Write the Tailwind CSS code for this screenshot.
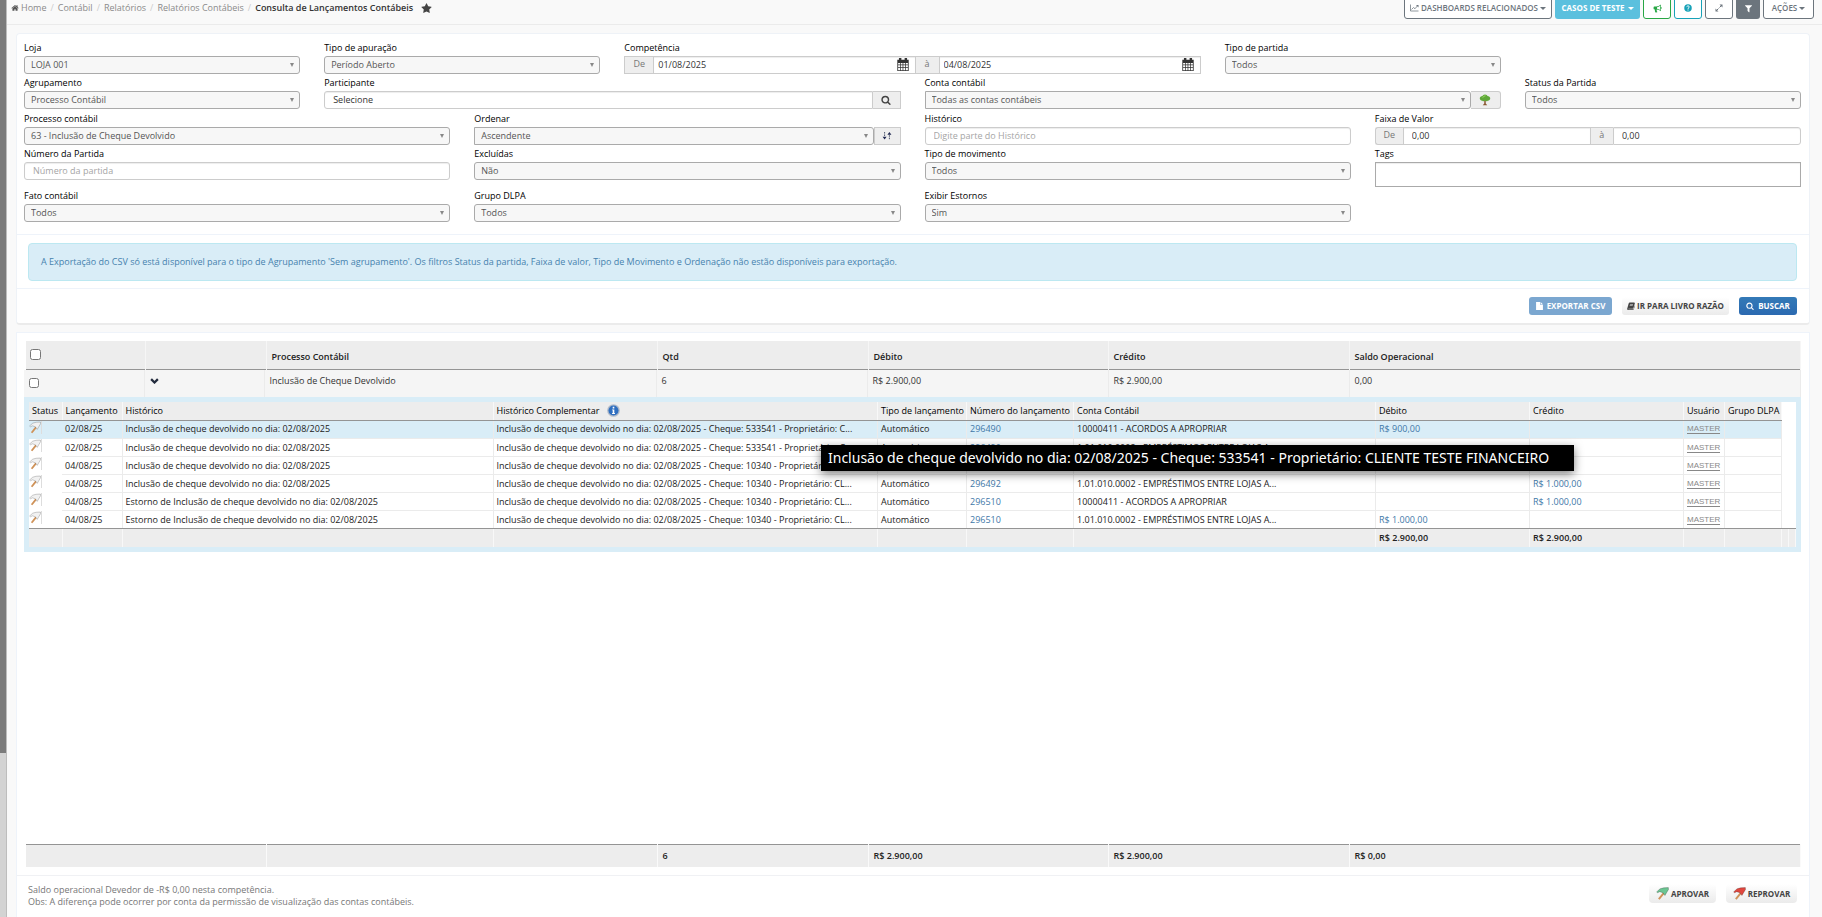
<!DOCTYPE html>
<html lang="pt-BR">
<head>
  <meta charset="UTF-8" />
  <title>Consulta de Lançamentos Contábeis</title>
  <meta name="viewport" content="width=device-width, initial-scale=1.0" />
  <script src="https://cdn.jsdelivr.net/npm/@tailwindcss/browser@4"></script>
</head>
<body class="flex min-h-screen overflow-hidden bg-[#f9f9f9] font-['Open_Sans','Noto_Sans',sans-serif] text-[9px] leading-3 text-[#333]">

  <!-- === ICONS === -->
  <svg class="hidden" aria-hidden="true">
    <symbol id="i-home" viewBox="0 0 1792 1792"><path fill="currentColor" d="M1472 992v480q0 26-19 45t-45 19h-384v-384h-256v384h-384q-26 0-45-19t-19-45v-480q0-1 .5-3t.5-3l575-474 575 474q1 2 1 6zm223-69l-62 74q-8 9-21 11h-3q-13 0-21-7l-692-577-692 577q-12 8-24 7-13-2-21-11l-62-74q-8-10-7-23.500t11-21.500l719-599q32-26 76-26t76 26l244 204v-195q0-14 9-23t23-9h192q14 0 23 9t9 23v408l219 182q10 8 11 21.500t-7 23.500z"/></symbol>
    <symbol id="i-star" viewBox="0 0 1792 1792"><path fill="currentColor" d="M1728 647q0 22-26 48l-363 354 86 500q1 7 1 20 0 21-10.500 35.500t-30.500 14.500q-19 0-40-12l-449-236-449 236q-22 12-40 12-21 0-31.500-14.500t-10.500-35.500q0-6 2-20l86-500-364-354q-25-27-25-48 0-37 56-46l502-73 225-455q19-41 49-41t49 41l225 455 502 73q56 9 56 46z"/></symbol>
    <symbol id="i-filter" viewBox="0 0 1792 1792"><path fill="currentColor" d="M1595 295q17 41-14 70l-493 493v742q0 42-39 59-13 5-25 5-27 0-45-19l-256-256q-19-19-19-45v-486l-493-493q-31-29-14-70 17-39 59-39h1280q42 0 59 39z"/></symbol>
    <symbol id="i-search" viewBox="0 0 1792 1792"><path fill="currentColor" d="M1216 832q0-185-131.500-316.500t-316.500-131.500-316.500 131.500-131.500 316.500 131.500 316.500 316.500 131.500 316.500-131.500 131.500-316.500zm512 832q0 52-38 90t-90 38q-54 0-90-38l-343-342q-179 124-399 124-143 0-273.500-55.500t-225-150-150-225-55.500-273.500 55.500-273.500 150-225 225-150 273.500-55.500 273.500 55.500 225 150 150 225 55.500 273.500q0 220-124 399l343 343q37 37 37 90z"/></symbol>
    <symbol id="i-chart" viewBox="0 0 18 16"><path fill="none" stroke="currentColor" stroke-width="1.500" d="M1 1v13h16M3 11l4-4 3 2.500 5-6"/><path fill="currentColor" d="M12 2h5v5z"/></symbol>
    <symbol id="i-horn" viewBox="0 0 16 16"><path fill="currentColor" fill-rule="evenodd" d="M14 1v4.500a1.500 1.500 0 0 1 0 3V13c-2.500-2-5-3-7-3.200-1 .5-.8 1.500 0 2.200-.5 1 .2 1.700 1 2.400-.8 1-3 1-4 .2-.4-1.500-1-3-.5-4.900H2.500A1.500 1.500 0 0 1 1 8.200V6a1.500 1.500 0 0 1 1.500-1.500H6C8.500 4.500 11.500 3 14 1zM12.800 3.300C11 4.700 9 5.500 7.200 5.700v2.700c1.800.2 3.800 1 5.600 2.400z"/></symbol>
    <symbol id="i-help" viewBox="0 0 16 16"><circle cx="8" cy="8" r="7.500" fill="currentColor"/><path fill="none" stroke="#fff" stroke-width="2" d="M5.500 6.200C5.700 3 10.600 3.200 10.500 6 10.400 7.600 8 7.600 8 9.800"/><path fill="#fff" d="M7 11h2v2H7z"/></symbol>
    <symbol id="i-expand" viewBox="0 0 16 16"><path stroke="currentColor" stroke-width="2" d="M4 12l3-3M9 7l3-3"/><path fill="currentColor" d="M9 1h6v6zM1 9v6h6z"/></symbol>
    <symbol id="i-calendar" viewBox="0 0 14 16"><path fill="currentColor" fill-rule="evenodd" d="M0 2h2V0h3v2h4V0h3v2h2v14H0zM1 6v2h2.300V6zm3.200 0v2h2.300V6zm3.200 0v2h2.300V6zm3.200 0v2H13V6zM1 9v2.300h2.300V9zm3.200 0v2.300h2.300V9zm3.200 0v2.300h2.300V9zm3.200 0v2.300H13V9zM1 12.300V15h2.300v-2.700zm3.200 0V15h2.300v-2.700zm3.200 0V15h2.300v-2.700zm3.200 0V15H13v-2.700z"/></symbol>
    <symbol id="i-sort" viewBox="0 0 12 10"><path fill="none" stroke="#2b3350" stroke-width="1" stroke-dasharray="2 1" d="M3 0v6M9 4v6"/><path fill="#1d2650" d="M.5 6h5L3 9.500zM6.500 3.500h5L9 0z"/></symbol>
    <symbol id="i-tree" viewBox="0 0 16 16"><path fill="#8a5a33" d="M7 8h2v4.500l2 2.500H5l2-2.500z"/><path fill="#5fa83a" d="M8 .5c2 0 3 1 3.300 2 2 0 3.700 1.300 3.700 3.200C15 8 13 9.300 11.500 9c-1 1-2 .8-3.500 0-1.500.8-2.500 1-3.500 0C3 9.300 1 8 1 5.700c0-1.900 1.700-3.200 3.700-3.200C5 1.500 6 .5 8 .5z"/><path fill="#8ccc5a" d="M5 3.500c1-1.500 3-2 4.500-1.200C8 3 7 4.500 4 5.500z"/></symbol>
    <symbol id="i-file" viewBox="0 0 12 14"><path fill="currentColor" d="M0 0h7v5h5v9H0zM8 0l4 4H8z"/></symbol>
    <symbol id="i-book" viewBox="0 0 16 16"><path fill="currentColor" fill-rule="evenodd" d="M5.500 1H14c1.500 0 2 1 1.600 2.200L13 12c-.3.800-1 1.300-1.900 1.300H3.300c-.8 0-1 .8-.2 1.200h9.200c.6 0 .9-.3 1.100-.8l2-6.700c.7.500.6 1 .4 1.700L13.600 14.500c-.3.900-1 1.500-2 1.500H3C1 16 0 14.500.5 13L3.300 3C3.700 1.800 4.300 1 5.500 1zM6.300 4l-.3 1h6l.3-1zM5.600 6.500l-.3 1h6l.3-1z"/></symbol>
    <symbol id="i-chevron" viewBox="0 0 12 8"><path fill="none" stroke="currentColor" stroke-width="3" d="M1.500 1.500L6 6l4.500-4.500"/></symbol>
    <symbol id="i-info" viewBox="0 0 16 16"><circle cx="8" cy="8" r="7.800" fill="#b3bcca"/><circle cx="8" cy="8" r="6.200" fill="#2f6fc0"/><path fill="#fff" d="M7 3.500h2v2H7zM6.300 6.700H9v4.500h.8v1H6.200v-1H7V7.700h-.7z"/></symbol>
    <symbol id="i-flag" viewBox="0 0 16 16"><path stroke="#cf9258" stroke-width="2.400" d="M9.500 7.500L3.500 15"/><path fill="currentColor" stroke="#0005" stroke-width=".8" stroke-linejoin="round" d="M.8 6L5 2.200 9.500 1l5.700-.3.200 2.300L13 7l-2 3.500L8.500 7 4.500 5.800 2 7z"/></symbol>
  </svg>

  <!-- === SIDEBAR SCROLLBAR === -->
  <div class="flex w-[7px] shrink-0 border-r border-[#bdbdbd] bg-[#d3d3d3]">
    <div class="h-[753px] w-full bg-[#7b7b7b]"></div>
  </div>

  <div class="flex min-w-0 flex-1 flex-col">

    <!-- === TOP BAR === -->
    <header class="flex h-[25px] shrink-0 justify-between border-b border-[#ebebeb] pr-2 pl-1">
      <nav class="flex h-4 items-center gap-1 text-[#8a8a8a]" aria-label="breadcrumb">
        <a href="#" class="flex items-center gap-[2px]"><svg class="size-2 text-[#555]"><use href="#i-home"/></svg>Home</a>
        <span class="text-[#ccc]">/</span><a href="#">Contábil</a>
        <span class="text-[#ccc]">/</span><a href="#">Relatórios</a>
        <span class="text-[#ccc]">/</span><a href="#">Relatórios Contábeis</a>
        <span class="text-[#ccc]">/</span><span class="font-semibold text-[#333]">Consulta de Lançamentos Contábeis</span>
        <button class="ml-1" aria-label="Favoritar"><svg class="size-[11px] text-[#444]"><use href="#i-star"/></svg></button>
      </nav>
      <div class="-mt-[3px] flex h-[22px] gap-[3px] text-[8px] font-semibold text-[#6c757d]">
        <button class="flex w-[148px] items-center justify-center gap-[2px] rounded-[3px] border border-[#6c757d] bg-white"><svg class="h-2 w-[9px]"><use href="#i-chart"/></svg>DASHBOARDS RELACIONADOS<span class="border-x-[3px] border-t-[3px] border-x-transparent"></span></button>
        <button class="flex w-[85px] items-center justify-center gap-[3px] rounded-[3px] bg-[#5bc0de] font-bold text-white">CASOS DE TESTE<span class="border-x-[3px] border-t-[3px] border-x-transparent"></span></button>
        <button class="flex w-7 items-center justify-center rounded-[3px] border border-[#28a745] bg-white text-[#28a745]" aria-label="Novidades"><svg class="size-[9px]"><use href="#i-horn"/></svg></button>
        <button class="flex w-7 items-center justify-center rounded-[3px] border border-[#17a2b8] bg-white text-[#17a2b8]" aria-label="Ajuda"><svg class="size-2"><use href="#i-help"/></svg></button>
        <button class="flex w-7 items-center justify-center rounded-[3px] border border-[#6c757d] bg-white" aria-label="Expandir"><svg class="size-2"><use href="#i-expand"/></svg></button>
        <button class="flex w-6 items-center justify-center rounded-[3px] bg-[#6c757d] text-white" aria-label="Filtros"><svg class="size-[9px]"><use href="#i-filter"/></svg></button>
        <button class="flex w-[51px] items-center justify-center gap-[2px] rounded-[3px] border border-[#6c757d] bg-white">AÇÕES<span class="border-x-[3px] border-t-[3px] border-x-transparent"></span></button>
      </div>
    </header>

    <!-- === FILTERS === -->
    <section class="mt-2 mr-3 ml-[9px] rounded border border-b-2 border-[#eef2f7] border-b-[#ebebeb] bg-white">
      <form id="filters" class="grid grid-cols-12 gap-x-6 pt-[6px] pr-2 pb-[11px] pl-[7px]"></form>
      <div class="border-y border-[#eef3fa] pt-2 pr-3 pb-[7px] pl-[11px]">
        <div class="rounded border border-[#bce8f1] bg-[#d9edf7] px-3 py-3 text-[#4682ae]">A Exportação do CSV só está disponível para o tipo de Agrupamento 'Sem agrupamento'. Os filtros Status da partida, Faixa de valor, Tipo de Movimento e Ordenação não estão disponíveis para exportação.</div>
      </div>
      <div class="flex justify-end gap-[10px] px-3 py-2 text-[8px] font-bold">
        <button class="flex h-[18px] w-[83px] items-center justify-center gap-1 rounded-[3px] bg-[#7ba7d0] text-white"><svg class="h-2 w-[7px]"><use href="#i-file"/></svg>EXPORTAR CSV</button>
        <button class="flex h-[18px] w-[107px] items-center justify-center gap-[2px] rounded-[3px] bg-linear-to-b from-white to-[#ebebeb] text-[#444]"><svg class="size-2"><use href="#i-book"/></svg>IR PARA LIVRO RAZÃO</button>
        <button class="flex h-[18px] w-[58px] items-center justify-center gap-1 rounded-[3px] bg-linear-to-b from-[#337ab7] to-[#2b69b0] text-white"><svg class="size-2"><use href="#i-search"/></svg>BUSCAR</button>
      </div>
    </section>

    <!-- === RESULTS === -->
    <section class="mt-[7px] mr-3 ml-[9px] flex flex-1 flex-col border-x border-t border-[#eef3fa] bg-white">
      <div class="pt-2 pr-2 pl-[7px]">
        <div class="pl-[2px]">
          <table class="w-full table-fixed text-left">
            <colgroup><col class="w-[119px]"><col class="w-[121px]"><col class="w-[391px]"><col class="w-[211px]"><col class="w-[240px]"><col class="w-[241px]"><col></colgroup>
            <thead>
              <tr class="h-7 border-b border-[#949494] bg-[#ededed] text-[#222] [&>th]:border-r [&>th]:border-[#f6f6f6] [&>th]:px-[5px] [&>th]:pt-1 [&>th]:font-semibold">
                <th><input type="checkbox" class="mb-1 ml-[-1px] block size-[11px]" aria-label="Selecionar todos"></th><th></th>
                <th>Processo Contábil</th><th>Qtd</th><th>Débito</th><th>Crédito</th><th>Saldo Operacional</th>
              </tr>
            </thead>
          </table>
        </div>

        <div class="h-[474px]">
          <table class="w-full table-fixed text-left">
            <colgroup><col class="w-[120px]"><col class="w-[120px]"><col class="w-[392px]"><col class="w-[211px]"><col class="w-[241px]"><col class="w-[241px]"><col></colgroup>
            <tbody>
              <tr class="h-[27px] bg-[#f5f5f5] [&>td]:border-r [&>td]:border-[#ebebeb] [&>td]:px-[5px] [&>td]:pb-1">
                <td><input type="checkbox" class="mt-1 block size-[10px]" aria-label="Selecionar linha"></td>
                <td><button class="block" aria-label="Recolher"><svg class="h-[6px] w-[9px] text-[#222b3c]"><use href="#i-chevron"/></svg></button></td>
                <td>Inclusão de Cheque Devolvido</td><td>6</td><td>R$ 2.900,00</td><td>R$ 2.900,00</td><td>0,00</td>
              </tr>
            </tbody>
          </table>
          <div class="relative bg-[#d9edf7] p-[5px]">
            <table class="w-full table-fixed bg-white text-left whitespace-nowrap">
              <colgroup><col class="w-[33px]"><col class="w-[60px]"><col class="w-[371px]"><col><col class="w-[89px]"><col class="w-[107px]"><col class="w-[302px]"><col class="w-[154px]"><col class="w-[154px]"><col class="w-[41px]"><col class="w-[57px]"><col class="w-[7px]"><col class="w-[7px]"></colgroup>
              <thead>
                <tr class="h-[19px] text-black [&>th]:border-r [&>th]:border-b [&>th]:border-r-[#f8f8f8] [&>th]:border-b-[#949494] [&>th]:bg-[#ededed] [&>th]:pl-[3px] [&>th]:font-medium">
                  <th>Status</th><th>Lançamento</th><th>Histórico</th>
                  <th><span class="flex items-center gap-2">Histórico Complementar <svg class="size-[13px]"><use href="#i-info"/></svg></span></th>
                  <th>Tipo de lançamento</th><th>Número do lançamento</th><th>Conta Contábil</th><th>Débito</th><th>Crédito</th><th>Usuário</th><th>Grupo DLPA</th>
                </tr>
              </thead>
              <tbody id="entries"></tbody>
              <tfoot>
                <tr class="h-[18px] bg-[#ededed] font-semibold text-[#222] [&>td]:border-t [&>td]:border-r [&>td]:border-t-[#949494] [&>td]:border-r-[#f8f8f8] [&>td]:pl-[3px]">
                  <td></td><td></td><td></td><td></td><td></td><td></td><td></td><td>R$ 2.900,00</td><td>R$ 2.900,00</td><td></td><td></td><td></td><td></td>
                </tr>
              </tfoot>
            </table>
            <div role="tooltip" class="absolute top-12 left-[797px] flex h-[26px] min-w-[753px] items-center bg-black px-[7px] font-['Noto_Sans',sans-serif] text-[14px] leading-5 whitespace-nowrap text-white shadow-[0_3px_10px_rgba(0,0,0,0.5)]">Inclusão de cheque devolvido no dia: 02/08/2025 - Cheque: 533541 - Proprietário: CLIENTE TESTE FINANCEIRO</div>
          </div>
        </div>

        <div class="pl-[2px]">
          <table class="w-full table-fixed text-left">
            <colgroup><col class="w-[240px]"><col class="w-[391px]"><col class="w-[211px]"><col class="w-[240px]"><col class="w-[241px]"><col></colgroup>
            <tfoot>
              <tr class="h-[23px] border-t border-[#949494] bg-[#ededed] font-semibold text-[#222] [&>td]:border-r [&>td]:border-r-[#fafafa] [&>td]:px-[5px]">
                <td></td><td></td><td>6</td><td>R$ 2.900,00</td><td>R$ 2.900,00</td><td>R$ 0,00</td>
              </tr>
            </tfoot>
          </table>
        </div>
      </div>

      <div class="mt-2 flex justify-between border-t border-[#f0f1f4] pt-2 pr-3 pl-[11px]">
        <p class="text-[#777]">Saldo operacional Devedor de -R$ 0,00 nesta competência.<br>Obs: A diferença pode ocorrer por conta da permissão de visualização das contas contábeis.</p>
        <div class="flex gap-[10px] text-[8px] font-bold text-[#444]">
          <button class="flex h-[19px] w-[67px] items-center justify-center gap-[2px] rounded bg-linear-to-b from-white to-[#ebebeb]"><svg class="size-[13px] text-[#6cc592]"><use href="#i-flag"/></svg>APROVAR</button>
          <button class="flex h-[19px] w-[71px] items-center justify-center gap-[2px] rounded bg-linear-to-b from-white to-[#ebebeb]"><svg class="size-[13px] text-[#e0473f]"><use href="#i-flag"/></svg>REPROVAR</button>
        </div>
      </div>
    </section>
  </div>

  <!-- === FILTER FIELDS === -->
  <script>
    const select = (id, value, shape = 'rounded-[3px]') => `
      <div class="relative min-w-0 flex-1">
        <select id="${id}" class="block h-[18px] w-full appearance-none border border-[#aaa] bg-[#f7f7f7] pl-[6px] text-[#555] ${shape}"><option>${value}</option></select>
        <span class="pointer-events-none absolute top-[7px] right-[6px] border-x-[2px] border-t-[4px] border-x-transparent border-t-[#888]"></span>
      </div>`;
    const input = (id, value, hint = '', shape = 'rounded-[3px] px-2') =>
      `<input id="${id}" value="${value}" placeholder="${hint}" class="block h-[18px] w-full min-w-0 flex-1 border border-[#ccc] bg-white pb-[2px] text-[#333] shadow-[inset_0_1px_1px_rgba(0,0,0,0.075)] placeholder:text-[#a5a5a5] ${shape}">`;
    const date = (id, value) => `
      <div class="relative min-w-0 flex-1">${input(id, value, '', 'pl-1')}
        <svg class="absolute top-[2px] right-[7px] h-[13px] w-3 text-[#333]"><use href="#i-calendar"/></svg>
      </div>`;
    const addon = (text, cls) => `<span class="flex h-[18px] items-center justify-center border-y border-[#ccc] bg-[#eee] pb-[2px] text-[#777] ${cls}">${text}</span>`;
    const iconButton = (icon, label, size, cls) => `<button type="button" aria-label="${label}" class="flex h-[18px] items-center justify-center border border-[#ccc] bg-[#eee] text-[#444] ${cls}"><svg class="${size}"><use href="#${icon}"/></svg></button>`;

    const fields = [
      ['loja', 'Loja', 'col-span-2', select('loja', 'LOJA 001')],
      ['apuracao', 'Tipo de apuração', 'col-span-2', select('apuracao', 'Período Aberto')],
      ['competencia', 'Competência', 'col-span-4', addon('De', 'w-[29px] border-l') + date('competencia', '01/08/2025') + addon('à', 'w-[23px]') + date('competenciaFim', '04/08/2025')],
      ['partida', 'Tipo de partida', 'col-span-2', select('partida', 'Todos')],
      ['agrupamento', 'Agrupamento', 'col-span-2 col-start-1 mb-[1px]', select('agrupamento', 'Processo Contábil')],
      ['participante', 'Participante', 'col-span-4', input('participante', 'Selecione', '', 'rounded-l-[3px] px-2') + iconButton('i-search', 'Buscar participante', 'size-[10px]', 'w-7 border-l-0')],
      ['conta', 'Conta contábil', 'col-span-4', select('conta', 'Todas as contas contábeis', 'rounded-r-[3px]') + iconButton('i-tree', 'Plano de contas', 'size-3', 'w-[30px] rounded-r-[3px] border-l-0')],
      ['status', 'Status da Partida', 'col-span-2', select('status', 'Todos')],
      ['processo', 'Processo contábil', 'col-span-3', select('processo', '63 - Inclusão de Cheque Devolvido')],
      ['ordenar', 'Ordenar', 'col-span-3', select('ordenar', 'Ascendente', 'rounded-r-[3px]') + iconButton('i-sort', 'Inverter ordem', 'h-2 w-[10px]', 'w-[27px]')],
      ['historico', 'Histórico', 'col-span-3', input('historico', '', 'Digite parte do Histórico')],
      ['valor', 'Faixa de Valor', 'col-span-3', addon('De', 'w-7 rounded-l-[3px] border-l') + input('valor', '0,00', '', 'px-2') + addon('à', 'w-[22px]') + input('valorFim', '0,00', '', 'rounded-r-[3px] px-2')],
      ['numero', 'Número da Partida', 'col-span-3', input('numero', '', 'Número da partida')],
      ['excluidas', 'Excluídas', 'col-span-3', select('excluidas', 'Não')],
      ['movimento', 'Tipo de movimento', 'col-span-3', select('movimento', 'Todos')],
      ['tags', 'Tags', 'col-span-3', `<textarea id="tags" class="block h-[25px] w-full resize-none border border-[#aaa] bg-white shadow-[inset_0_1px_1px_rgba(0,0,0,0.075)]"></textarea>`],
      ['fato', 'Fato contábil', 'col-span-3', select('fato', 'Todos')],
      ['dlpa', 'Grupo DLPA', 'col-span-3', select('dlpa', 'Todos')],
      ['estornos', 'Exibir Estornos', 'col-span-3', select('estornos', 'Sim')],
    ];
    document.getElementById('filters').innerHTML = fields.map(([id, label, span, control]) => `
      <div class="pb-[1px] ${span}">
        <label for="${id}" class="block h-4 pt-[1px] leading-[14px] font-medium text-black">${label}</label>
        <div class="flex items-start">${control}</div>
      </div>`).join('');
  </script>

  <!-- === ENTRY ROWS === -->
  <script>
    const inc = 'Inclusão de cheque devolvido no dia: 02/08/2025';
    const est = 'Estorno de Inclusão de cheque devolvido no dia: 02/08/2025';
    const rows = [
      ['02/08/25', inc, '533541 - Proprietário: C...', '296490', '10000411 - ACORDOS A APROPRIAR', 'R$ 900,00', ''],
      ['02/08/25', inc, '533541 - Proprietário: C...', '296490', '1.01.010.0002 - EMPRÉSTIMOS ENTRE LOJAS A...', '', ''],
      ['04/08/25', inc, '10340 - Proprietário: CL...', '296492', '10000411 - ACORDOS A APROPRIAR', 'R$ 1.000,00', ''],
      ['04/08/25', inc, '10340 - Proprietário: CL...', '296492', '1.01.010.0002 - EMPRÉSTIMOS ENTRE LOJAS A...', '', 'R$ 1.000,00'],
      ['04/08/25', est, '10340 - Proprietário: CL...', '296510', '10000411 - ACORDOS A APROPRIAR', '', 'R$ 1.000,00'],
      ['04/08/25', est, '10340 - Proprietário: CL...', '296510', '1.01.010.0002 - EMPRÉSTIMOS ENTRE LOJAS A...', 'R$ 1.000,00', ''],
    ];
    document.getElementById('entries').innerHTML = rows.map(([day, hist, comp, num, conta, deb, cred], i) => {
      const first = i === 0;
      const last = i === rows.length - 1;
      const line = last ? 'border-b border-b-[#949494]' : 'border-b border-b-[#ebebeb]';
      const c = `border-r border-r-[#ebebeb] pl-[3px] ${line} ${first ? 'bg-[#d9edf7] pb-[2px]' : ''}`;
      return `<tr class="h-[18px] text-[#222]">
        <td class="${first ? 'bg-[#d9edf7]' : ''} ${last ? line : ''}"><svg class="mb-1 block size-[13px] border-r border-[#ddd] text-[#f1f1f1]"><use href="#i-flag"/></svg></td>
        <td class="${c}">${day}</td><td class="${c}">${hist}</td>
        <td class="${c}">Inclusão de cheque devolvido no dia: 02/08/2025 - Cheque: ${comp}</td>
        <td class="${c}">Automático</td><td class="${c}"><a href="#" class="text-[#4178a8]">${num}</a></td><td class="${c}">${conta}</td>
        <td class="${c} text-[#4178a8]">${deb}</td><td class="${c} text-[#4178a8]">${cred}</td>
        <td class="${c}"><a href="#" class="mt-[2px] block w-fit border-b border-[#888] font-['Liberation_Sans',sans-serif] text-[8px] leading-[8px] text-[#888]">MASTER</a></td>
        <td class="${c}"></td>${last ? `<td class="${line}"></td><td class="${line}"></td>` : ''}</tr>`;
    }).join('');
  </script>
</body>
</html>
